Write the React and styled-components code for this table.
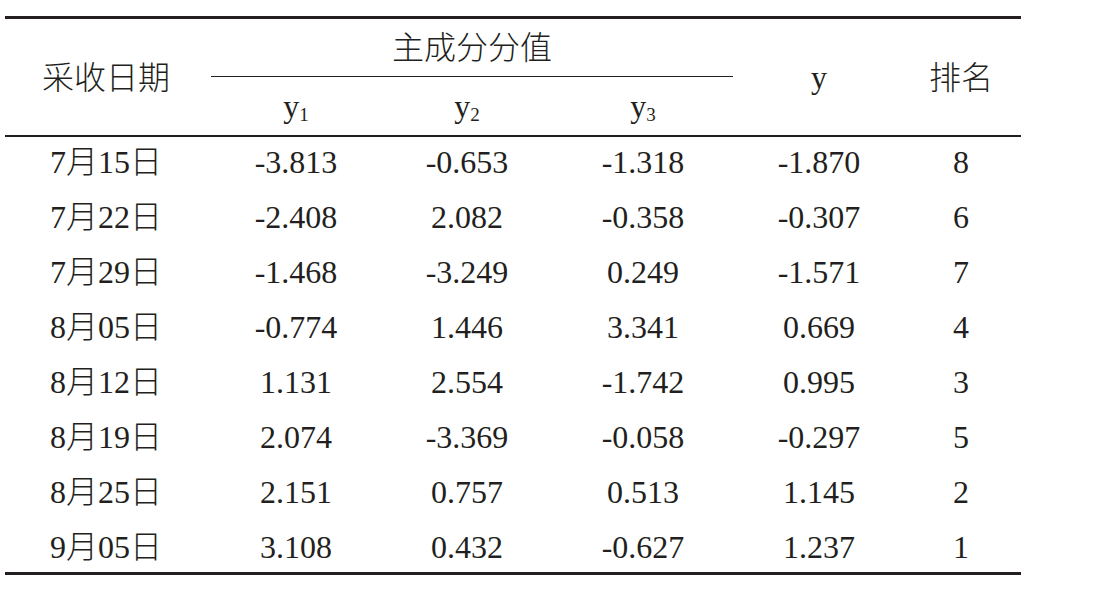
import React from "react"
import styled, { createGlobalStyle } from "styled-components"

const ink = "#231f20"
// shared column template, header and body rows line up on it
const columns = "202px 178px 164px 188px 164px 120px"

const rows = [
  ["7月15日", "-3.813", "-0.653", "-1.318", "-1.870", "8"],
  ["7月22日", "-2.408", "2.082", "-0.358", "-0.307", "6"],
  ["7月29日", "-1.468", "-3.249", "0.249", "-1.571", "7"],
  ["8月05日", "-0.774", "1.446", "3.341", "0.669", "4"],
  ["8月12日", "1.131", "2.554", "-1.742", "0.995", "3"],
  ["8月19日", "2.074", "-3.369", "-0.058", "-0.297", "5"],
  ["8月25日", "2.151", "0.757", "0.513", "1.145", "2"],
  ["9月05日", "3.108", "0.432", "-0.627", "1.237", "1"],
]

const GlobalStyle = createGlobalStyle`
  body {
    margin: 0;
    background: #fff;
  }
`

const Page = styled.div`
  padding: 16px 0 0 5px;
  font-family: "Liberation Serif", "Noto Sans CJK SC", serif;
  font-size: 32px;
  color: ${ink};
`

const Table = styled.div`
  width: 1016px;
  border-top: 3px solid ${ink};
  border-bottom: 3px solid ${ink};
`

const Head = styled.div`
  display: grid;
  grid-template-columns: ${columns};
  grid-template-rows: 58px 58px;
  border-bottom: 2px solid ${ink};
`

// the print uses a thin song face for hanzi, keep them light
const Han = styled.span`
  font-family: "Noto Sans CJK SC", sans-serif;
  font-weight: 300;
`

const HeadCell = styled.div`
  grid-column: ${p => p.$col};
  grid-row: ${p => p.$row || "1 / 3"};
  display: flex;
  align-items: center;
  justify-content: center;
  line-height: 36px;
  ${Han} {
    margin-bottom: 5px;
  }
`

const Group = styled(HeadCell)`
  margin: 0 4px;
  border-bottom: 1px solid ${ink};
`

const Sub = styled.sub`
  font-size: 19px;
  line-height: 0;
  vertical-align: -4px;
`

const Row = styled.div`
  display: grid;
  grid-template-columns: ${columns};
  box-sizing: border-box;
  height: 55px;
  padding-top: 6.5px;
  line-height: 36px;
  text-align: center;
  &:last-child {
    height: 49.5px;
  }
`

const Cell = styled.div`
  white-space: nowrap;
  ${Han} {
    line-height: 0;
  }
`

const mixed = s =>
  s.split(/([\u4e00-\u9fff]+)/).map((part, i) =>
    i % 2 ? <Han key={i}>{part}</Han> : part
  )

export default function App() {
  return (
    <Page>
      <GlobalStyle />
      <Table>
        <Head>
          <HeadCell $col="1"><Han>采收日期</Han></HeadCell>
          <Group $col="2 / 5" $row="1"><Han>主成分分值</Han></Group>
          {[1, 2, 3].map(n => (
            <HeadCell key={n} $col={n + 1} $row="2">
              <span>
                y<Sub>{n}</Sub>
              </span>
            </HeadCell>
          ))}
          <HeadCell $col="5">y</HeadCell>
          <HeadCell $col="6"><Han>排名</Han></HeadCell>
        </Head>
        {rows.map(r => (
          <Row key={r[0]}>
            {r.map((v, i) => (
              <Cell key={i}>{mixed(v)}</Cell>
            ))}
          </Row>
        ))}
      </Table>
    </Page>
  )
}
